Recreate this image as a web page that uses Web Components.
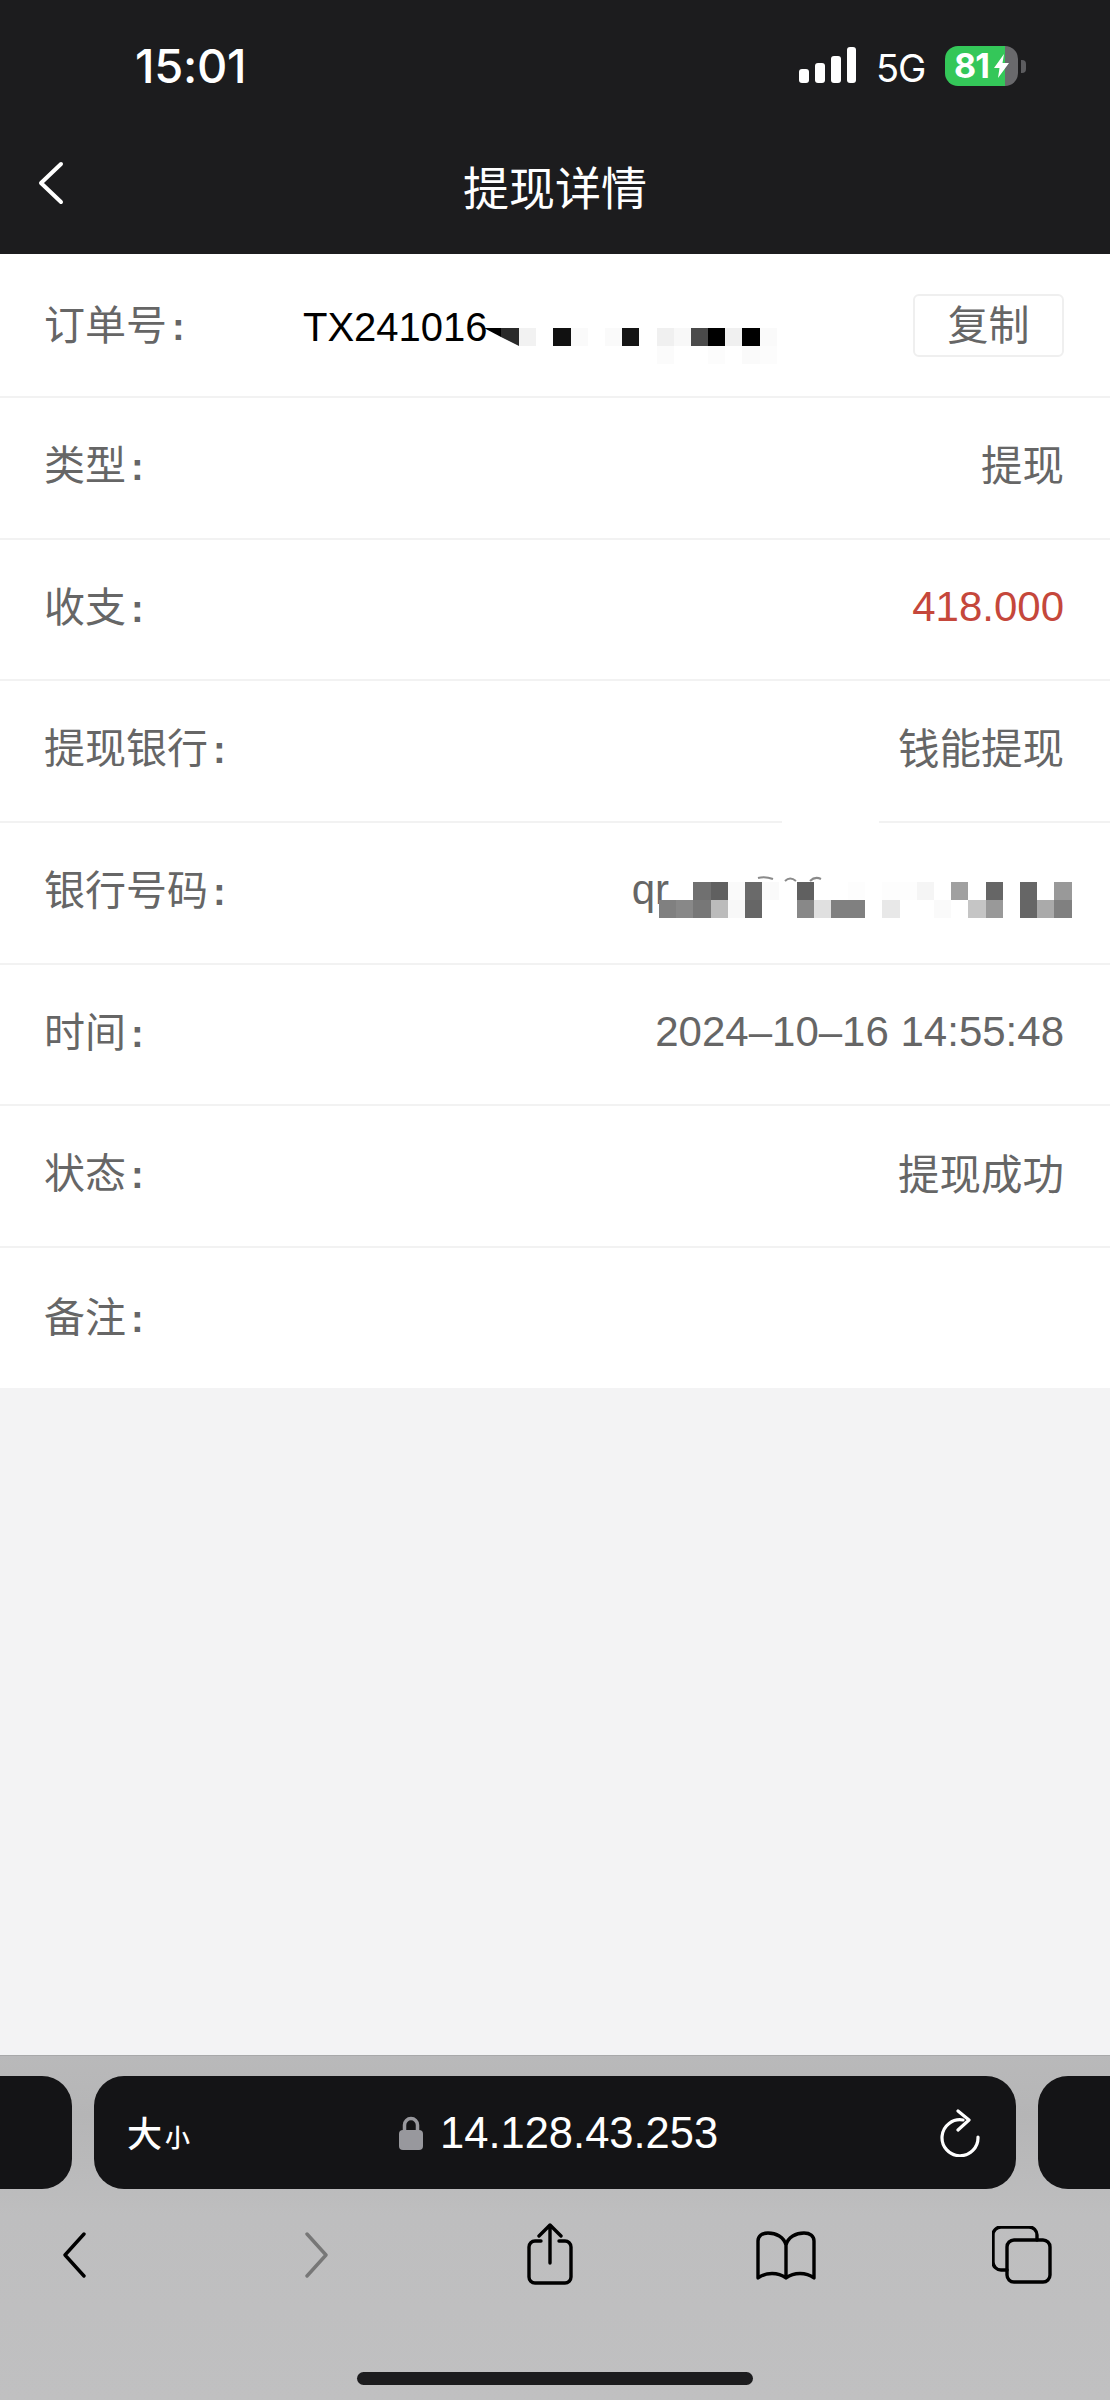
<!DOCTYPE html>
<html lang="zh"><head><meta charset="utf-8"><title>提现详情</title>
<style>html,body{margin:0;padding:0;background:#f3f3f4}</style></head><body>
<phone-screen>
  <app-header slot="top" heading="提现详情"></app-header>
  <detail-row label="订单号" first>
    <span style="font-family:'Liberation Sans',sans-serif;font-size:40px;color:#000">TX241016</span>
    <copy-button slot="end">复制</copy-button>
    <pixel-mosaic slot="over" style="left:519px;top:74px" size="17.2" cols="15" cells="#f2f2f2,-,#111,#fafafa,-,#fafafa,#151515,-,#f0f0f0,#f8f8f8,#4a4a4a,#000,#f0f0f0,#000,#fafafa,-,-,-,-,-,-,-,-,#fbfbfb,-,-,#fcfcfc,-,#fafafa,#fcfcfc"></pixel-mosaic>
    <mosaic-wedge slot="over" style="left:484px;top:74px"></mosaic-wedge>
  </detail-row>
  <detail-row label="类型"><span slot="end">提现</span></detail-row>
  <detail-row label="收支"><latin-value slot="end" style="color:#c5473b">418.000</latin-value></detail-row>
  <detail-row label="提现银行"><span slot="end">钱能提现</span></detail-row>
  <detail-row label="银行号码">
    <latin-value slot="end" style="margin-right:395px">qr</latin-value>
    <seam-patch slot="over" style="left:782px;top:-4px"></seam-patch>
    <pixel-mosaic slot="over" style="left:659px;top:59px" size="17.2" cols="24" cells="-,-,#707070,#606060,#fafafa,#6a6a6a,#fafafa,-,#606060,-,-,#fdfdfd,-,#fdfdfd,#fdfdfd,#f5f5f5,-,#a0a0a0,-,#666,-,#666,-,#999,#808080,#888,#777,#bbb,#f8f8f8,#666,-,-,#888,#e0e0e0,#808080,#808080,-,#e8e8e8,-,-,#fafafa,-,#c5c5c5,#999,-,#666,#aaa,#808080"></pixel-mosaic>
  </detail-row>
  <detail-row label="时间"><latin-value slot="end">2024–10–16 14:55:48</latin-value></detail-row>
  <detail-row label="状态"><span slot="end">提现成功</span></detail-row>
  <detail-row label="备注" last></detail-row>
  <safari-bar slot="bottom" url="14.128.43.253"></safari-bar>
</phone-screen>
<script>
const CJK = "'Noto Sans CJK SC','Liberation Sans',sans-serif";
function def(name, html) {
  customElements.define(name, class extends HTMLElement {
    constructor() { super(); this.attachShadow({mode:'open'}); }
    connectedCallback() {
      this.shadowRoot.innerHTML = typeof html === 'function' ? html(this) : html;
    }
  });
}
def('phone-screen', `<style>
:host{display:flex;flex-direction:column;width:1110px;height:2400px;background:#f3f3f4;overflow:hidden;font-family:${CJK}}
.fill{flex:1}
</style><slot name="top"></slot><slot></slot><div class="fill"></div><slot name="bottom"></slot>`);

def('status-bar', `<style>
:host{display:flex;align-items:flex-start;height:146px;padding:0 84px 0 135px;color:#fff;font-family:Inter,'Liberation Sans',sans-serif;box-sizing:border-box}
.time{font-size:47px;font-weight:500;letter-spacing:-.3px;line-height:40px;margin-top:46px;width:664px;flex:none}
.sig{display:block;margin-top:47px;flex:none}
.g{font-size:38px;line-height:36px;margin:50px 0 0 20px;width:48px;letter-spacing:-1.200px;flex:none}
.bat{position:relative;margin:46px 0 0 21px;width:73px;height:40px;border-radius:13px;overflow:hidden;flex:none;background:linear-gradient(90deg,#34c759 0 60px,#69696c 60px);
 display:flex;align-items:center;font-size:34px;font-weight:700;line-height:40px;padding-left:9px;box-sizing:border-box;letter-spacing:-1px}
.bat svg{margin-left:5px;flex:none}
.nub{width:5px;height:13px;background:#5c5c5f;border-radius:0 4px 4px 0;margin:60px 0 0 3px;flex:none}
</style>
<div class="time">15:01</div>
<svg class="sig" width="57" height="36" viewBox="0 0 57 36" fill="#fff"><rect x="0" y="22" width="10" height="14" rx="3"/><rect x="16" y="16" width="10" height="20" rx="3"/><rect x="32" y="9" width="10" height="27" rx="3"/><rect x="48" y="0" width="9" height="36" rx="3"/></svg>
<div class="g">5G</div>
<div class="bat">81<svg width="15" height="24" viewBox="0 0 15 24" fill="#fff"><path d="M10 0 0 14h5.500L4 24 15 9H8.500z"/></svg></div><div class="nub"></div>`);

def('app-header', h => `<style>
:host{display:block;background:#1c1c1e;height:254px;color:#fff}
.nav{position:relative;display:flex;align-items:center;justify-content:center;height:78px}
h1{margin:0;font:400 46px/1 ${CJK}}
.back{position:absolute;left:38px;top:15px}
</style><status-bar></status-bar><div class="nav">
<svg class="back" width="26" height="44" viewBox="0 0 26 44" fill="none" stroke="#fff" stroke-width="4" stroke-linecap="round" stroke-linejoin="round"><path d="M23 3 3 22 23 41"/></svg>
<h1>${h.getAttribute('heading')}</h1></div>`);

def('detail-row', h => {
  const first = h.hasAttribute('first'), last = h.hasAttribute('last');
  return `<style>
:host{display:block;position:relative;background:#fff;color:#666;box-sizing:border-box;height:${first?144:last?140:141.7}px;font:400 41.500px/1 ${CJK}}
.row{display:flex;align-items:center;height:100%;padding:0 46px ${first?0:8}px 44px;box-sizing:border-box;${last?'padding-bottom:5px;':'border-bottom:2px solid #f2f2f2;'}}
.label{flex:none;width:259px;font-size:41px;${first?'margin-top:-3px;':''}}
.colon{font-family:'Liberation Sans',sans-serif;margin-left:5px;font-weight:700;font-size:38px}
.val{flex:1}
</style><div class="row"><span class="label">${h.getAttribute('label')}<span class="colon">:</span></span><span class="val"><slot></slot></span><slot name="end"></slot></div><slot name="over"></slot>`;
});

def('latin-value', `<style>:host{display:inline-block;font:400 42px/1 'Liberation Sans',sans-serif;margin-top:3px}</style><slot></slot>`);

def('copy-button', `<style>
:host{display:flex;align-items:center;justify-content:center;width:151px;height:63px;box-sizing:border-box;border:2px solid #efefef;border-radius:6px;color:#666;font:400 41px/1 ${CJK};background:#fff;margin-top:1px;padding-bottom:6px}
</style><slot></slot>`);

def('pixel-mosaic', h => {
  const s = +h.getAttribute('size'), cols = +h.getAttribute('cols');
  const cells = h.getAttribute('cells').split(',').map(c => `<i style="background:${c === '-' ? 'transparent' : c}"></i>`).join('');
  return `<style>:host{position:absolute;display:grid;grid-template-columns:repeat(${cols},${s}px);grid-auto-rows:18px}i{display:block}</style>${cells}`;
});
def('mosaic-wedge', `<style>:host{position:absolute;display:block;width:35px;height:18px}svg{display:block}</style><svg width="35" height="18" viewBox="0 0 35 18"><path d="M0 0H17V9Z" fill="#000"/><path d="M17 0H35V18L17 9Z" fill="#2a2a2a"/></svg>`);
def('seam-patch', `<style>:host{position:absolute;display:block;width:97px;height:68px;background:linear-gradient(#fff 0 6px,transparent 6px)}svg{position:absolute;left:-27px;top:57px;display:block}</style>
<svg width="70" height="7" viewBox="0 0 70 7" fill="none" stroke="#8a8a8a" stroke-width="2"><path d="M3 2Q10 0 18 3M30 5Q35 0 41 5M55 5Q60 0 66 3"/></svg>`);

const ico = (w,h,body,extra='') => `<svg width="${w}" height="${h}" viewBox="0 0 ${w} ${h}" fill="none" stroke="#000" stroke-width="3.400" stroke-linecap="round" stroke-linejoin="round" ${extra}>${body}</svg>`;
def('safari-bar', h => `<style>
:host{display:block;height:345px;background:linear-gradient(#b9b9ba,#b5b5b6 60px,#bebebf 160px,#c0c0c1);border-top:1px solid #a9a9aa;box-sizing:border-box;position:relative}
.tabs{display:flex;gap:22px;padding-top:20px}
.stub{flex:none;width:72px;height:113px;background:#141416;border-radius:0 30px 30px 0}
.stub.r{width:73px;border-radius:30px 0 0 30px}
.url{flex:none;width:922px;height:113px;background:#141416;border-radius:30px;display:flex;align-items:center;color:#fff;box-sizing:border-box;padding:0 36px 0 33px}
.aa{font:500 35px/1 ${CJK};width:272px;margin-top:-2px;display:flex;align-items:flex-end;flex:none}
.aa small{font-size:25px;line-height:1;margin-left:3px}
.lock{margin-right:17px;flex:none}
.addr{font:400 43.500px/1 'Liberation Sans',sans-serif;flex:1;margin-top:2px}
.tools{display:flex;align-items:flex-start;height:70px;padding:34px 0 0 62px}
.tools svg{display:block;flex:none}
.ind{width:396px;height:13px;border-radius:7px;background:#1c1c1e;margin:79px auto 0}
</style>
<div class="tabs"><div class="stub"></div>
<div class="url"><span class="aa">大<small>小</small></span>
<svg class="lock" width="24" height="34" viewBox="0 0 24 34"><path d="M5.500 16V9a6.500 6.500 0 0 1 13 0v7" fill="none" stroke="#98989d" stroke-width="3.500"/><rect x="0" y="14" width="24" height="20" rx="4" fill="#98989d"/></svg>
<span class="addr">${h.getAttribute('url')}</span>
<svg width="40" height="48" viewBox="0 0 40 48" fill="none" stroke="#fff" stroke-width="3.200" stroke-linecap="round" stroke-linejoin="round"><path d="M23 11A18 18 0 1 0 38 28"/><path d="M18 2 29 11 18 21"/></svg>
</div>
<div class="stub r"></div></div>
<div class="tools">
${ico(25,46,'<path d="M22 2 3 23 22 44"/>','style="margin-top:9px"')}
${ico(25,46,'<path d="M3 2 22 23 3 44"/>','style="margin:9px 0 0 217px;stroke:#777"')}
${ico(46,62,'<path d="M14 18H8a6 6 0 0 0-6 6v30a6 6 0 0 0 6 6h30a6 6 0 0 0 6-6V24a6 6 0 0 0-6-6h-6"/><path d="M23 40V2M12 13 23 2 34 13"/>','style="margin:0 0 0 198px"')}
${ico(60,50,'<path d="M30 47V14C28 6 20 2 12 2 6 2 2 5 2 10V47C10 41 22 41 30 47 38 41 50 41 58 47V10C58 5 54 2 48 2 40 2 32 6 30 14"/>','style="margin:8px 0 0 183px"')}
${ico(60,58,'<path d="M15 44H9a8 8 0 0 1-8-8V9a8 8 0 0 1 8-8h28a8 8 0 0 1 8 8v5"/><rect x="15" y="14" width="43" height="42" rx="7"/>','style="margin:3px 0 0 176px"')}
</div>
<div class="ind"></div>`);
</script>
</body></html>
